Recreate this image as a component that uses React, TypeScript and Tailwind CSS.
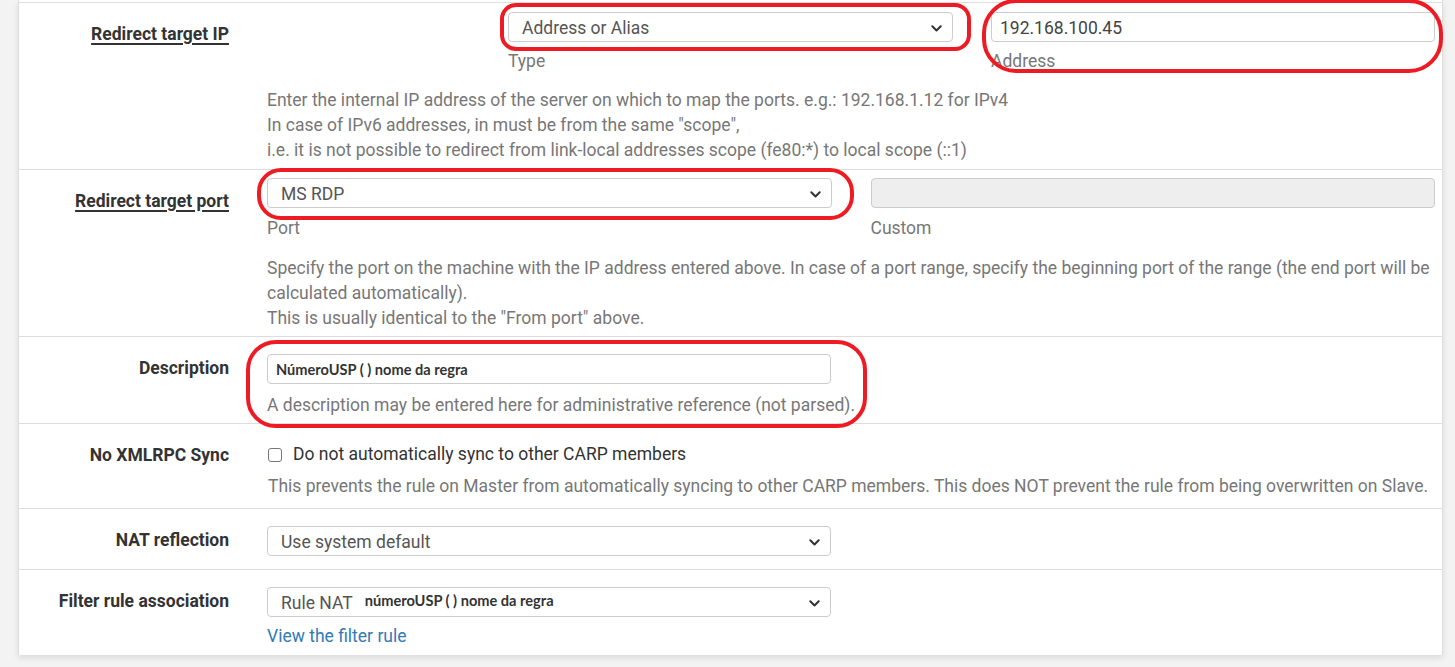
const Chevron = () => (
  <svg width="11" height="7" viewBox="0 0 11 7" className="shrink-0">
    <path d="M1.3 1.3 L5.5 5.5 L9.7 1.3" fill="none" stroke="#333" strokeWidth="2" strokeLinecap="round" strokeLinejoin="round" />
  </svg>
);

const Select = ({ children }: { children: React.ReactNode }) => (
  <div className="h-[30px] w-full flex items-center justify-between pl-[13px] pr-[10px] pt-[2px] border border-[#ccc] rounded-[4px] bg-white text-[#555] text-[17.5px]">
    <div className="flex items-center whitespace-nowrap">{children}</div>
    <Chevron />
  </div>
);

const Label = ({ text, u }: { text: string; u?: boolean }) => (
  <div className="w-[210px] shrink-0 pt-[18.5px] mr-[38px] text-right font-bold text-[17.5px] leading-[25px] text-[#333] whitespace-nowrap">
    <span className={u ? "underline decoration-[1.5px] underline-offset-[3px]" : ""}>{text}</span>
  </div>
);

const Help = ({ children, className = "" }: { children: React.ReactNode; className?: string }) => (
  <div className={"text-[17.5px] leading-[25px] text-[#777] " + className}>{children}</div>
);

const pasted = "font-['Lato',sans-serif] font-bold text-[14.6px] text-[#333]";

const Mark = ({ className }: { className: string }) => (
  <div className={"absolute border-[4px] border-[#ed1c24] pointer-events-none " + className} />
);

export default function App() {
  return (
    <div className="relative min-h-screen bg-[#f3f3f3] font-['Roboto',sans-serif] overflow-hidden">
      <div className="ml-[18px] w-[1425px] bg-white border-x border-[#dedede] shadow-[0_3px_6px_rgba(0,0,0,0.10)]">
        <div className="h-[2px]" />

        {/* Redirect target IP */}
        <div className="flex border-t border-[#ddd]">
          <Label text="Redirect target IP" u />
          <div className="flex-1 pr-[7px] pt-[9px] pb-[6px]">
            <div className="flex">
              <div className="ml-[241px] w-[445px]">
                <Select>Address or Alias</Select>
                <div className="mt-[7px] text-[17.5px] leading-[25px] text-[#777]">Type</div>
              </div>
              <div className="ml-[38px] flex-1">
                <div className="h-[30px] flex items-center pl-[8px] pt-[2px] border border-[#ccc] rounded-[4px] text-[17.5px] text-[#444]">
                  192.168.100.45
                </div>
                <div className="mt-[7px] text-[17.5px] leading-[25px] text-[#777]">Address</div>
              </div>
            </div>
            <Help className="mt-[14px]">
              <div>Enter the internal IP address of the server on which to map the ports. e.g.: 192.168.1.12 for IPv4</div>
              <div>In case of IPv6 addresses, in must be from the same "scope",</div>
              <div>i.e. it is not possible to redirect from link-local addresses scope (fe80:*) to local scope (::1)</div>
            </Help>
          </div>
        </div>

        {/* Redirect target port */}
        <div className="flex border-t border-[#ddd]">
          <Label text="Redirect target port" u />
          <div className="flex-1 pr-[7px] pt-[8px] pb-[5px]">
            <div className="grid grid-cols-2 gap-x-[39px]">
              <div>
                <Select>MS RDP</Select>
                <div className="mt-[8px] text-[17.5px] leading-[25px] text-[#777]">Port</div>
              </div>
              <div>
                <div className="h-[30px] border border-[#ccc] rounded-[4px] bg-[#eee]" />
                <div className="mt-[8px] text-[17.5px] leading-[25px] text-[#777]">Custom</div>
              </div>
            </div>
            <Help className="mt-[15px]">
              <div>
                Specify the port on the machine with the IP address entered above. In case of a port range, specify the beginning port of the range (the end port will be calculated automatically).
              </div>
              <div>This is usually identical to the "From port" above.</div>
            </Help>
          </div>
        </div>

        {/* Description */}
        <div className="flex border-t border-[#ddd]">
          <Label text="Description" />
          <div className="flex-1 pr-[7px] pt-[17px] pb-[5px]">
            <div className="w-[564px] h-[30px] flex items-center pl-[8px] pt-[1px] border border-[#ccc] rounded-[4px]">
              <span className={pasted}>NúmeroUSP ( ) nome da regra</span>
            </div>
            <Help className="mt-[9px]">A description may be entered here for administrative reference (not parsed).</Help>
          </div>
        </div>

        {/* No XMLRPC Sync */}
        <div className="flex border-t border-[#ddd]">
          <Label text="No XMLRPC Sync" />
          <div className="flex-1 pr-[7px] pt-[18px] pb-[9px]">
            <div className="flex items-center h-[25px] pl-[1px]">
              <span className="w-[14px] h-[14px] border border-[#767676] rounded-[3px] bg-white" />
              <span className="ml-[11px] text-[17.5px] text-[#333]">Do not automatically sync to other CARP members</span>
            </div>
            <Help className="mt-[7px] pl-[1px]">
              This prevents the rule on Master from automatically syncing to other CARP members. This does NOT prevent the rule from being overwritten on Slave.
            </Help>
          </div>
        </div>

        {/* NAT reflection */}
        <div className="flex border-t border-[#ddd]">
          <Label text="NAT reflection" />
          <div className="flex-1 pr-[7px] pt-[17px] pb-[13px]">
            <div className="w-[564px]">
              <Select>Use system default</Select>
            </div>
          </div>
        </div>

        {/* Filter rule association */}
        <div className="flex border-t border-[#ddd]">
          <Label text="Filter rule association" />
          <div className="flex-1 pr-[7px] pt-[17px] pb-[6px]">
            <div className="w-[564px]">
              <Select>
                <span>Rule NAT</span>
                <span className={pasted + " ml-[12px] -mt-[5px]"}>númeroUSP ( ) nome da regra</span>
              </Select>
            </div>
            <div className="mt-[7px] text-[17.5px] leading-[25px] text-[#337ab7]">View the filter rule</div>
          </div>
        </div>
      </div>

      {/* hand-drawn red marks */}
      <Mark className="left-[500px] top-[3px] w-[471px] h-[48px] rounded-[16px]" />
      <Mark className="left-[982px] top-[-1px] w-[461px] h-[74px] rounded-[34px]" />
      <Mark className="left-[257px] top-[168px] w-[597px] h-[52px] rounded-[24px]" />
      <Mark className="left-[246px] top-[340px] w-[621px] h-[88px] rounded-[30px]" />
    </div>
  );
}
